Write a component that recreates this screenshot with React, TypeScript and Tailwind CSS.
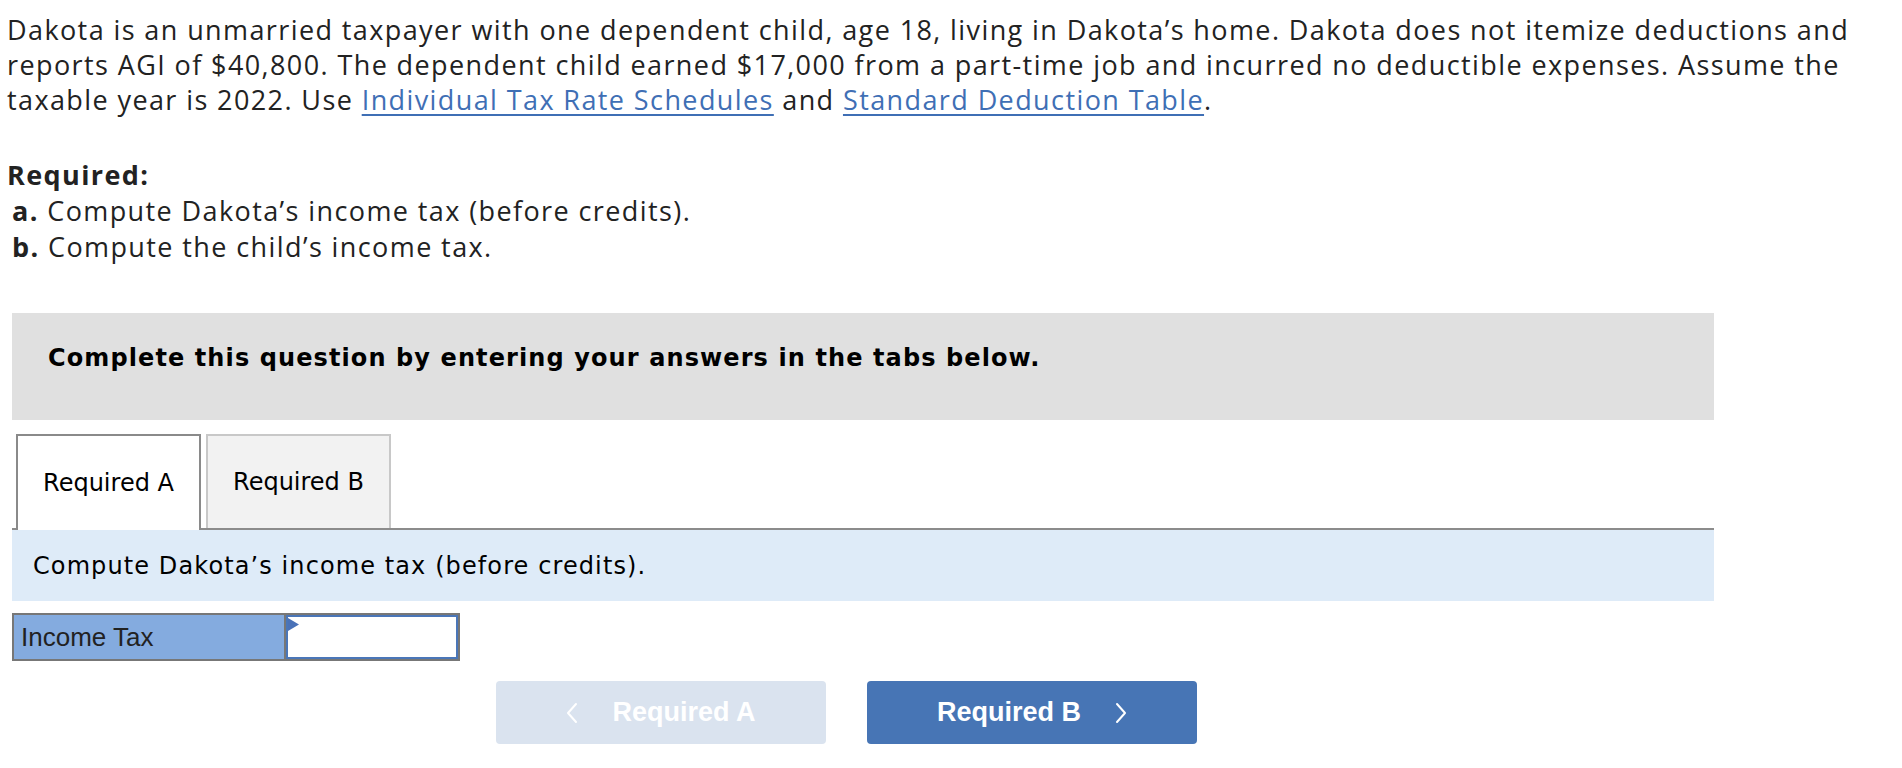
import React from "react";

const Chevron = ({ dir }: { dir: "left" | "right" }) => (
  <svg width="12" height="22" viewBox="0 0 12 22" fill="none">
    <polyline
      points={dir === "left" ? "10,2 2,11 10,20" : "2,2 10,11 2,20"}
      stroke="white"
      strokeWidth="2"
      strokeLinecap="round"
      strokeLinejoin="round"
    />
  </svg>
);

export default function App() {
  return (
    <div className="min-h-screen bg-white pl-[7px] pt-[12px] text-[#222]">
      {/* question text */}
      <p className="font-['Open_Sans',sans-serif] text-[27px] leading-[35px] tracking-[1.4px]">
        Dakota is an unmarried taxpayer with one dependent child, age 18, living in Dakota’s home. Dakota does not itemize deductions and
        <br />
        reports AGI of $40,800. The dependent child earned $17,000 from a part-time job and incurred no deductible expenses. Assume the
        <br />
        taxable year is 2022. Use{" "}
        <a href="#" className="text-[#3f6fb5] underline decoration-2 underline-offset-4">
          Individual Tax Rate Schedules
        </a>{" "}
        and{" "}
        <a href="#" className="text-[#3f6fb5] underline decoration-2 underline-offset-4">
          Standard Deduction Table
        </a>
        .
      </p>

      <div className="mt-[40px] font-['Open_Sans',sans-serif] text-[27px] leading-[36px] tracking-[1.4px]">
        <div className="font-bold">Required:</div>
        <div className="pl-[5px]">
          <span className="font-bold">a.</span> Compute Dakota’s income tax (before credits).
        </div>
        <div className="pl-[5px]">
          <span className="font-bold">b.</span> Compute the child’s income tax.
        </div>
      </div>

      {/* instructions banner */}
      <div className="ml-[5px] mt-[48px] h-[107px] w-[1702px] bg-[#e0e0e0] pl-[36px] pt-[31px] font-['DejaVu_Sans',Verdana,sans-serif] text-[24px] font-bold leading-[28px] tracking-[1.1px] text-black">
        Complete this question by entering your answers in the tabs below.
      </div>

      {/* tabs */}
      <div className="ml-[5px] mt-[14px] flex h-[96px] w-[1702px] items-start gap-[5px] border-b-2 border-[#8c8c8c] pl-[4px] font-['DejaVu_Sans',Verdana,sans-serif] text-[24px] text-black">
        <div className="relative z-10 flex h-[96px] w-[185px] items-center justify-center border-2 border-b-0 border-[#8a8a8a] bg-white">
          Required A
        </div>
        <div className="flex h-[94px] w-[185px] items-center justify-center border-2 border-b-0 border-[#c8c8c8] bg-[#f2f2f2]">
          Required B
        </div>
      </div>

      <div className="ml-[5px] flex h-[71px] w-[1702px] items-center bg-[#deebf8] pl-[21px] font-['DejaVu_Sans',Verdana,sans-serif] text-[24px] tracking-[1.1px] text-black">
        Compute Dakota’s income tax (before credits).
      </div>

      {/* answer row */}
      <div className="ml-[5px] mt-[12px] flex h-[48px] w-[448px] border-2 border-[#777]">
        <div className="flex w-[272px] items-center border-r-2 border-[#777] bg-[#84abdf] pl-[7px] font-['Liberation_Sans',Arial,sans-serif] text-[26px] text-[#222]">
          Income Tax
        </div>
        <div className="relative flex-1 border-2 border-[#4a76b8] bg-white">
          <svg className="absolute left-0 top-[1px]" width="11" height="13" viewBox="0 0 11 13">
            <polygon points="0,0 11,6.5 0,13" fill="#4a72b8" />
          </svg>
          <input className="h-full w-full bg-transparent px-2 outline-none" />
        </div>
      </div>

      {/* nav buttons */}
      <div className="ml-[489px] mt-[20px] flex gap-[41px] font-['Liberation_Sans',Arial,sans-serif] text-[27px] font-bold text-white">
        <button className="flex h-[63px] w-[330px] items-center justify-center gap-[34px] rounded-[4px] bg-[#dae3ef]">
          <Chevron dir="left" />
          <span>Required A</span>
        </button>
        <button className="flex h-[63px] w-[330px] items-center justify-center gap-[34px] rounded-[4px] bg-[#4775b5]">
          <span>Required B</span>
          <Chevron dir="right" />
        </button>
      </div>
    </div>
  );
}
